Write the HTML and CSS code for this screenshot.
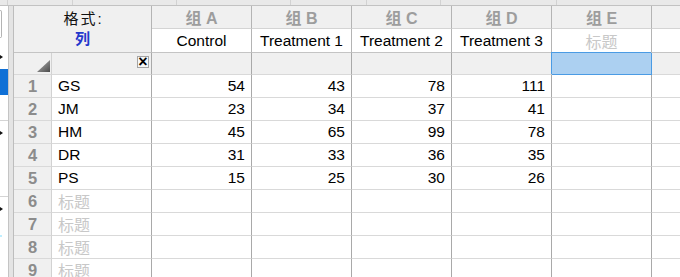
FILE: index.html
```html
<!DOCTYPE html>
<html>
<head>
<meta charset="utf-8">
<link rel="stylesheet" href="styles.css">
</head>
<body>
<div class="app">
  <div class="topbar">
    <span class="tick t1"></span><span class="tick t2"></span><span class="tick t3"></span><span class="tick t4"></span><span class="tick t5"></span><span class="tick t6"></span><span class="tick t7"></span>
  </div>
  <div class="main">
    <div class="sidebar">
      <div class="sb-box"></div>
      <div class="sb-arrow a1"></div>
      <div class="sb-sel"></div>
      <div class="sb-line l1"></div>
      <div class="sb-arrow a2"></div>
      <div class="sb-line l2"></div>
      <div class="sb-arrow a3"></div>
      <div class="sb-dot"></div>
    </div>
    <div class="gutter"></div>
    <div class="sheet">
      <div class="cell fmt"><span class="fmt-title">格式:</span><span class="fmt-kind">列</span></div>
      <div class="cell grp">组 A</div>
      <div class="cell grp">组 B</div>
      <div class="cell grp">组 C</div>
      <div class="cell grp">组 D</div>
      <div class="cell grp">组 E</div>
      <div class="cell grp end"></div>

      <div class="cell ttl">Control</div>
      <div class="cell ttl">Treatment 1</div>
      <div class="cell ttl">Treatment 2</div>
      <div class="cell ttl">Treatment 3</div>
      <div class="cell ttl ph">标题</div>
      <div class="cell ttl end"></div>

      <div class="cell rn corner"><svg width="13" height="12" viewBox="0 0 13 12"><defs><linearGradient id="g" x1="0" y1="0" x2="1" y2="1"><stop offset="0" stop-color="#b8b8b8"/><stop offset="1" stop-color="#4a4a4a"/></linearGradient></defs><polygon points="13,0 13,12 0,12" fill="url(#g)"/></svg></div>
      <div class="cell nm3"><span class="xbtn">×</span></div>
      <div class="cell sub"></div>
      <div class="cell sub"></div>
      <div class="cell sub"></div>
      <div class="cell sub"></div>
      <div class="cell sub sel"></div>
      <div class="cell sub end"></div>

      <div class="cell rn">1</div><div class="cell nm">GS</div><div class="cell num">54</div><div class="cell num">43</div><div class="cell num">78</div><div class="cell num">111</div><div class="cell num"></div><div class="cell num end"></div>
      <div class="cell rn">2</div><div class="cell nm">JM</div><div class="cell num">23</div><div class="cell num">34</div><div class="cell num">37</div><div class="cell num">41</div><div class="cell num"></div><div class="cell num end"></div>
      <div class="cell rn">3</div><div class="cell nm">HM</div><div class="cell num">45</div><div class="cell num">65</div><div class="cell num">99</div><div class="cell num">78</div><div class="cell num"></div><div class="cell num end"></div>
      <div class="cell rn">4</div><div class="cell nm">DR</div><div class="cell num">31</div><div class="cell num">33</div><div class="cell num">36</div><div class="cell num">35</div><div class="cell num"></div><div class="cell num end"></div>
      <div class="cell rn">5</div><div class="cell nm">PS</div><div class="cell num">15</div><div class="cell num">25</div><div class="cell num">30</div><div class="cell num">26</div><div class="cell num"></div><div class="cell num end"></div>
      <div class="cell rn">6</div><div class="cell nm ph">标题</div><div class="cell num"></div><div class="cell num"></div><div class="cell num"></div><div class="cell num"></div><div class="cell num"></div><div class="cell num end"></div>
      <div class="cell rn">7</div><div class="cell nm ph">标题</div><div class="cell num"></div><div class="cell num"></div><div class="cell num"></div><div class="cell num"></div><div class="cell num"></div><div class="cell num end"></div>
      <div class="cell rn">8</div><div class="cell nm ph">标题</div><div class="cell num"></div><div class="cell num"></div><div class="cell num"></div><div class="cell num"></div><div class="cell num"></div><div class="cell num end"></div>
      <div class="cell rn">9</div><div class="cell nm ph">标题</div><div class="cell num"></div><div class="cell num"></div><div class="cell num"></div><div class="cell num"></div><div class="cell num"></div><div class="cell num end"></div>
    </div>
  </div>
</div>
</body>
</html>
```
FILE: styles.css
```css
html, body {
  margin: 0;
  padding: 0;
  background: #ffffff;
  overflow: hidden;
}
.app {
  width: 680px;
  height: 277px;
  overflow: hidden;
  font-family: "Liberation Sans", "Noto Sans CJK SC", sans-serif;
}
.topbar {
  height: 5px;
  background: #e9e9e9;
  border-bottom: 1px solid #c2c2c2;
  position: relative;
}
.tick {
  position: absolute;
  top: 0;
  width: 1px;
  height: 5px;
  background: #d2d2d2;
}
.t1 { left: 7px; }
.t2 { left: 72px; }
.t3 { left: 176px; }
.t4 { left: 290px; }
.t5 { left: 366px; }
.t6 { left: 440px; }
.t7 { left: 556px; }
.main {
  display: flex;
  height: 271px;
}
.sidebar {
  width: 8px;
  background: #ffffff;
  border-right: 1px solid #c4c4c4;
  display: flex;
  flex-direction: column;
}
.sb-box {
  width: 1px;
  height: 26px;
  margin-top: 4px;
  border: 1px solid #b4b4b4;
  border-left: none;
  border-radius: 0 2px 2px 0;
}
.sb-arrow {
  width: 0;
  height: 0;
  border-top: 2px solid transparent;
  border-bottom: 2px solid transparent;
  border-left: 3px solid #111111;
}
.a1 { margin-top: 17px; }
.sb-sel {
  margin-top: 10px;
  height: 26px;
  background: #0f70d6;
}
.sb-line {
  height: 1px;
  background: #d4d4d4;
}
.l1 { margin-top: 25px; }
.a2 { margin-top: 10px; }
.l2 { margin-top: 61px; }
.a3 { margin-top: 10px; }
.sb-dot {
  margin-top: 24px;
  width: 2px;
  height: 2px;
  background: #bfefff;
}
.gutter {
  width: 4px;
  background: #e4e4e4;
}
.sheet {
  flex: 1;
  border-left: 1px solid #bdbdbd;
  display: grid;
  grid-template-columns: 38px 100px repeat(5, 100px) 1fr;
  grid-template-rows: 23px 24px 22px repeat(9, 23px);
  font-size: 15.5px;
  color: #000000;
}
.cell {
  box-sizing: border-box;
  border-bottom: 1px solid #d9d9d9;
  border-right: 1px solid #a9a9a9;
  display: flex;
  align-items: center;
  overflow: hidden;
  white-space: nowrap;
}
.end {
  border-right: none;
}
.fmt {
  grid-column: 1 / 3;
  grid-row: 1 / 3;
  background: #f0f0f0;
  border-bottom-color: #c4c4c4;
  border-right-color: #b4b4b4;
  flex-direction: column;
  justify-content: center;
  gap: 3px;
  padding-bottom: 1px;
}
.fmt-title {
  font-size: 15px;
  letter-spacing: 2px;
  color: #111111;
  line-height: 17px;
  margin-left: 2px;
}
.fmt-kind {
  font-size: 15px;
  font-weight: bold;
  color: #2438cc;
  line-height: 17px;
}
.grp {
  background: #f0f0f0;
  justify-content: center;
  font-weight: bold;
  font-size: 16px;
  color: #9d9d9d;
  border-right-color: #b4b4b4;
  border-bottom-color: #d4d4d4;
}
.ttl {
  background: #ffffff;
  justify-content: center;
  border-right-color: #b4b4b4;
  border-bottom-color: #c4c4c4;
}
.ph {
  color: #c8c8c8;
  font-size: 16px;
}
.rn {
  background: #f0f0f0;
  justify-content: center;
  font-weight: bold;
  font-size: 16.5px;
  color: #8c8c8c;
  border-right-color: #d2d2d2;
}
.corner {
  justify-content: flex-end;
  align-items: flex-end;
  padding: 0 1px 2px 0;
}
.nm3 {
  background: #f0f0f0;
  justify-content: flex-end;
  align-items: flex-start;
  padding: 3px 2px 0 0;
}
.xbtn {
  box-sizing: border-box;
  width: 12px;
  height: 12px;
  border: 1px solid #a4a4a4;
  background: #f7f7f7;
  font-size: 16px;
  font-weight: bold;
  line-height: 10px;
  text-align: center;
  color: #000000;
}
.sub {
  background: #f0f0f0;
}
.sel {
  background: #acd0f1;
  border-right-color: #4a9be4;
  border-bottom-color: #4a9be4;
  box-shadow: -1px -1px 0 #4a9be4;
}
.nm {
  padding-left: 6px;
}
.num {
  justify-content: flex-end;
  padding-right: 6px;
}
```
